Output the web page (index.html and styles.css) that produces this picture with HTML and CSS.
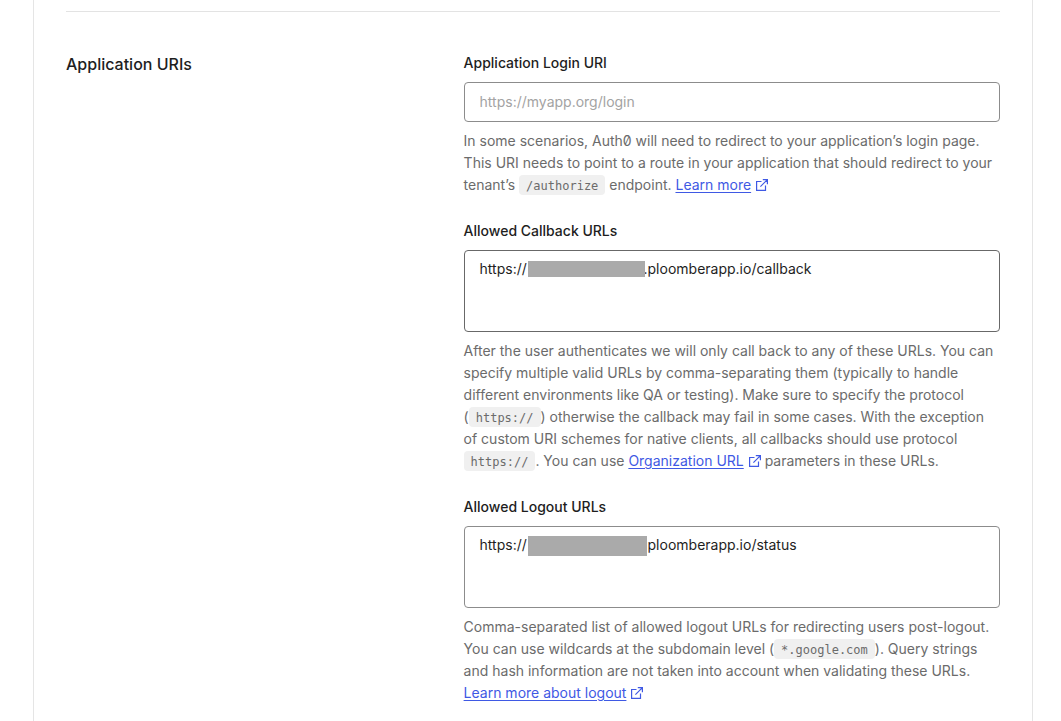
FILE: index.html
```html
<!DOCTYPE html>
<html lang="en">
<head>
<meta charset="utf-8">
<meta name="viewport" content="width=device-width, initial-scale=1">
<title>Application URIs</title>
<link rel="stylesheet" href="styles.css">
</head>
<body>
<svg class="sprite" aria-hidden="true">
  <symbol id="external" viewBox="0 0 12 12">
    <path d="M5.5 2.5H.6v8.9h8.9V6.5M6.8.6h4.6v4.6M11.4.6 4.4 7.6" fill="none" stroke="currentColor" stroke-width="1.2"/>
  </symbol>
</svg>
<main class="panel">
  <section class="section">
    <h2 class="section-title">Application URIs</h2>
    <form class="fields">
      <div class="field">
        <label class="label" for="login">Application Login URI</label>
        <input class="control" id="login" type="url" placeholder="https://myapp.org/login">
        <p class="help">In some scenarios, Auth0 will need to redirect to your application’s login page. This URI needs to point to a route in your application that should redirect to your tenant’s <code class="code">/authorize</code> endpoint. <a class="link" href="#login">Learn more</a> <svg class="icon" aria-hidden="true"><use href="#external"/></svg></p>
      </div>
      <div class="field">
        <label class="label" for="callback">Allowed Callback URLs</label>
        <div class="masked">
          <textarea class="control area area-active" id="callback" spellcheck="false">https://&nbsp;&nbsp;&nbsp;&nbsp;&nbsp;&nbsp;&nbsp;&nbsp;&nbsp;&nbsp;&nbsp;&nbsp;&nbsp;&nbsp;&nbsp;&nbsp;&nbsp;&nbsp;&nbsp;&nbsp;&nbsp;&nbsp;&nbsp;&nbsp;&nbsp;&nbsp;&nbsp;&nbsp;&nbsp;&#8202;&#8202;.ploomberapp.io/callback</textarea>
          <span class="mask mask-callback"></span>
        </div>
        <p class="help">After the user authenticates we will only call back to any of these URLs. You can specify multiple valid URLs by comma-separating them (typically to handle different environments like QA or testing). Make sure to specify the protocol (<code class="code">https://</code>) otherwise the callback may fail in some cases. With the exception of custom URI schemes for native clients, all callbacks should use protocol <code class="code">https://</code>. You can use <a class="link" href="#callback">Organization URL</a> <svg class="icon" aria-hidden="true"><use href="#external"/></svg> parameters in these URLs.</p>
      </div>
      <div class="field">
        <label class="label" for="logout">Allowed Logout URLs</label>
        <div class="masked">
          <textarea class="control area" id="logout" spellcheck="false">https://&nbsp;&nbsp;&nbsp;&nbsp;&nbsp;&nbsp;&nbsp;&nbsp;&nbsp;&nbsp;&nbsp;&nbsp;&nbsp;&nbsp;&nbsp;&nbsp;&nbsp;&nbsp;&nbsp;&nbsp;&nbsp;&nbsp;&nbsp;&nbsp;&nbsp;&nbsp;&nbsp;&nbsp;&nbsp;&#8202;&#8202;.ploomberapp.io/status</textarea>
          <span class="mask mask-logout"></span>
        </div>
        <p class="help">Comma-separated list of allowed logout URLs for redirecting users post-logout. You can use wildcards at the subdomain level (<code class="code">*.google.com</code>). Query strings and hash information are not taken into account when validating these URLs. <a class="link" href="#logout">Learn more about logout</a> <svg class="icon" aria-hidden="true"><use href="#external"/></svg></p>
      </div>
    </form>
  </section>
</main>
</body>
</html>
```
FILE: styles.css
```css
* { box-sizing: border-box; }
body {
  margin: 0;
  background: #fff;
  color: #1e1e1e;
  font: 14px/22px Inter, sans-serif;
}
.sprite { position: absolute; width: 0; height: 0; }
.panel {
  min-height: 100vh;
  margin: 0 28px 0 33px;
  padding: 11px 32px 16px;
  border: solid #e5e5e5;
  border-width: 0 1px;
}
.section {
  display: grid;
  grid-template-columns: 2fr 3fr;
  column-gap: 40px;
  padding-top: 40px;
  border-top: 1px solid #e3e3e3;
}
.section-title {
  margin: 0;
  font-size: 16px;
  line-height: 24px;
  font-weight: 500;
}
.fields {
  display: flex;
  flex-direction: column;
  gap: 24px;
  min-width: 0;
}
.field { display: flex; flex-direction: column; }
.label {
  margin-bottom: 8px;
  font-weight: 500;
}
.control {
  display: block;
  width: 100%;
  height: 40px;
  margin: 0;
  padding: 0 15px 2px;
  border: 1px solid #8c8c8c;
  border-radius: 4px;
  background: #fff;
  color: inherit;
  font: inherit;
}
.control::placeholder { color: #a3a3a3; opacity: 1; }
.area {
  height: 82px;
  padding: 7px 15px;
  resize: none;
  overflow: auto;
}
.area-active { border-color: #686868; }
.masked { position: relative; }
.mask { position: absolute; left: 64px; background: #aaa; }
.mask-callback { top: 11px; width: 117px; height: 16px; }
.mask-logout { top: 10px; width: 119px; height: 20px; }
.help {
  margin: 8px 0 0;
  color: #6b6b6b;
  font-feature-settings: "zero";
}
.code {
  padding: 4px 7px 2px;
  border-radius: 4px;
  background: #f0f0f0;
  font: 12px/16px "DejaVu Sans Mono", monospace;
}
.link {
  color: #3f59e4;
  text-decoration: underline;
  text-underline-offset: 2px;
}
.icon {
  width: 12px;
  height: 12px;
  margin-left: 1px;
  color: #3f59e4;
  vertical-align: -1px;
}
```
